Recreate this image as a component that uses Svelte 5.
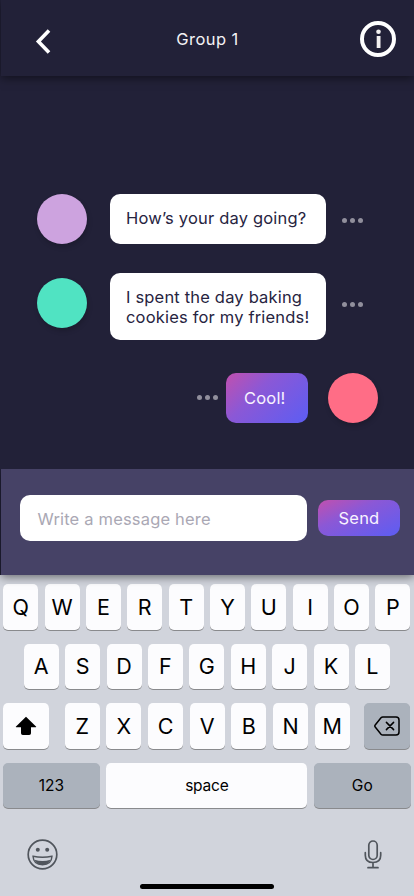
<script>
  const messages = [
    { lines: ['How’s your day going?'], color: '#cda3df', mine: false, cls: 'first' },
    { lines: ['I spent the day baking', 'cookies for my friends!'], color: '#50e3c2', mine: false, cls: 'second' },
    { lines: ['Cool!'], color: '#ff6d86', mine: true, cls: 'third' }
  ];
  const topRow = [...'QWERTYUIOP'];
  const homeRow = [...'ASDFGHJKL'];
  const bottomRow = [...'ZXCVBNM'];
</script>

<div class="screen">
  <header>
    <button class="back" aria-label="Back">
      <svg width="20" height="30" viewBox="0 0 20 30"><path d="M16 4.400 5.400 15.400 16 26.400" fill="none" stroke="#fff" stroke-width="3.600" /></svg>
    </button>
    <h1>Group 1</h1>
    <button class="info" aria-label="Info">
      <svg width="36" height="36" viewBox="0 0 36 36">
        <circle cx="18" cy="18" r="16" fill="none" stroke="#fff" stroke-width="4" />
        <circle cx="18.500" cy="10.700" r="2.300" fill="#f4f1f1" />
        <rect x="16.700" y="15" width="3.800" height="12" fill="#f4f1f1" />
      </svg>
    </button>
  </header>

  <main>
    {#each messages as m}
      <div class="message {m.cls}" class:mine={m.mine}>
        <div class="avatar" style="background:{m.color}"></div>
        <div class="bubble">
          {#each m.lines as line}<div class="line">{line}</div>{/each}
        </div>
        <div class="dots"><i></i><i></i><i></i></div>
      </div>
    {/each}
  </main>

  <form class="composer" onsubmit={(e) => e.preventDefault()}>
    <div class="field"><span>Write a message here</span></div>
    <button class="send"><span>Send</span></button>
  </form>

  <section class="keyboard">
    <div class="row">
      {#each topRow as k}<div class="key">{k}</div>{/each}
    </div>
    <div class="row home">
      {#each homeRow as k}<div class="key">{k}</div>{/each}
    </div>
    <div class="row">
      <div class="key wide">
        <svg width="22" height="20" viewBox="0 0 22 20"><path d="M11 .7 21 10.400q.7.8-.3.8H16v6q0 1.800-1.800 1.800H7.800Q6 19 6 17.200v-6H1.300q-1 0-.3-.8Z" fill="#000" /></svg>
      </div>
      <div class="letters">
        {#each bottomRow as k}<div class="key">{k}</div>{/each}
      </div>
      <div class="key wide gray">
        <svg width="26" height="20" viewBox="0 0 26 20" fill="none" stroke="#000" stroke-width="1.500" stroke-linecap="round" stroke-linejoin="round">
          <path d="M8.800 1h13.200q3 0 3 3v12q0 3-3 3H8.800q-1 0-1.800-.8L1.200 11q-.8-1 0-2L7 1.800Q7.800 1 8.800 1Z" />
          <path d="m12.400 6.400 7.200 7.200m0-7.200-7.200 7.200" />
        </svg>
      </div>
    </div>
    <div class="row last">
      <div class="key gray side">123</div>
      <div class="key space">space</div>
      <div class="key gray side">Go</div>
    </div>
    <footer>
      <svg width="31" height="31" viewBox="0 0 31 31" fill="none" stroke="#50555c" stroke-width="1.700">
        <circle cx="15.500" cy="15.500" r="14.300" />
        <circle cx="10.800" cy="10.800" r="2" fill="#50555c" stroke="none" />
        <circle cx="20.200" cy="10.800" r="2" fill="#50555c" stroke="none" />
        <path d="M6 17.300q9.500 2 19 0-.5 8.500-9.500 8.500T6 17.300Z" stroke-width="1.400" />
        <path d="M7.500 20.800q8 2.400 16 0-2.200 5-8 5t-8-5Z" fill="#50555c" stroke="none" />
      </svg>
      <svg width="18" height="30" viewBox="0 0 18 30" fill="none" stroke="#50555c" stroke-width="1.700" stroke-linecap="round">
        <rect x="4.800" y="2" width="8.400" height="18.500" rx="4.200" />
        <path d="M1.300 13.700v2.500q0 7.300 7.700 7.300t7.700-7.300v-2.500M9 23.500v5M4 28.700h10" />
      </svg>
    </footer>
    <div class="indicator"></div>
  </section>
</div>

<style>
  :global(body) { margin: 0; }
  * { box-sizing: border-box; }
  .screen {
    width: 414px;
    height: 896px;
    display: flex;
    flex-direction: column;
    overflow: hidden;
    background: #222138;
    font-family: Inter, 'Liberation Sans', sans-serif;
  }
  button { border: 0; padding: 0; background: none; font: inherit; display: block; }
  svg { display: block; }
  header {
    height: 76px;
    flex: none;
    margin-left: 1px;
    padding: 2px 18px 0 32px;
    display: flex;
    align-items: center;
    justify-content: space-between;
    background: #222138;
    box-shadow: 0 2px 9px rgba(0, 0, 0, 0.5);
  }
  .back { width: 22px; padding-top: 4px; }
  h1 {
    margin: 0;
    font-size: 16.500px;
    font-weight: 400;
    letter-spacing: 0.450px;
    line-height: 22px;
    color: #f4f1f4;
  }
  main {
    height: 393px;
    flex: none;
    padding: 118px 36px 0 37px;
    display: flex;
    flex-direction: column;
  }
  .message { display: flex; align-items: center; }
  .second { margin-top: 29px; }
  .second .avatar { margin-top: -7px; }
  .second .dots { margin-top: -4px; }
  .third { margin-top: 33px; }
  .mine { flex-direction: row-reverse; }
  .avatar {
    width: 50px;
    height: 50px;
    flex: none;
    border-radius: 50%;
    box-shadow: 1px 3px 5px rgba(0, 0, 0, 0.18);
  }
  .bubble {
    width: 216px;
    min-height: 50px;
    margin-left: 23px;
    padding: 14px 0 13px 16px;
    border-radius: 10px;
    background: #fff;
    color: #27243f;
    font-size: 16.500px;
    line-height: 20px;
    letter-spacing: 0.180px;
    white-space: nowrap;
  }
  .second .bubble { height: 67px; }
  .mine .bubble {
    width: 82px;
    margin: 0 20px 0 0;
    padding: 15px 0 0 18px;
    color: #f8f3ff;
    background: linear-gradient(135deg, #c150ae 0%, #8b58d6 38%, #5c5df3 100%);
  }
  .dots { display: flex; gap: 3px; margin: 3px 0 0 16px; }
  .dots i { width: 5px; height: 5px; border-radius: 50%; background: #918f9c; }
  .mine .dots { margin: -1px 8px 0 0; }
  .composer {
    position: relative;
    z-index: 1;
    height: 106px;
    flex: none;
    margin: 0 0 0 1px;
    padding: 26px 14px 0 19px;
    display: flex;
    align-items: flex-start;
    justify-content: space-between;
    background: #464266;
    box-shadow: 0 2px 9px rgba(0, 0, 0, 0.5);
    clip-path: inset(0 0 -20px -1px);
  }
  .field {
    width: 287px;
    height: 46px;
    padding: 14px 17.500px;
    border-radius: 10px;
    background: #fff;
    color: #aaa8b4;
    font-size: 16.500px;
    line-height: 20px;
    letter-spacing: 0.180px;
    white-space: nowrap;
  }
  .send {
    width: 82px;
    height: 36px;
    margin-top: 5px;
    border-radius: 10px;
    color: #f8f3ff;
    font-size: 16.500px;
    line-height: 36px;
    letter-spacing: 0.200px;
    background: linear-gradient(155deg, #c150ae 0%, #8b58d6 38%, #5c5df3 100%);
  }
  .keyboard {
    flex: 1;
    padding: 9px 3.500px 0 3.200px;
    display: flex;
    flex-direction: column;
    background: #d1d4dc;
    color: #000;
  }
  .row {
    height: 45.500px;
    flex: none;
    margin-bottom: 14px;
    display: flex;
    justify-content: space-between;
  }
  .home { padding: 0 20.500px; }
  .letters { width: 285px; margin-left: 0.800px; display: flex; justify-content: space-between; }
  .key {
    width: 35px;
    height: 45.500px;
    display: flex;
    align-items: center;
    justify-content: center;
    border-radius: 5px;
    background: #fcfcfe;
    box-shadow: 0 1px 0 #898a8d;
    font-size: 21.500px;
  }
  .wide { width: 46px; }
  .gray { background: #abb2bc; }
  .side { width: 96.500px; font-size: 15.500px; }
  .space { width: 201px; font-size: 15.500px; letter-spacing: -0.200px; }
  .last { margin-bottom: 0; }
  footer {
    height: 31px;
    margin-top: 31px;
    padding: 0 28.500px 0 24px;
    display: flex;
    justify-content: space-between;
  }
  .indicator {
    width: 134px;
    height: 5px;
    margin: 13.500px auto 0;
    border-radius: 3px;
    background: #000;
  }
</style>
